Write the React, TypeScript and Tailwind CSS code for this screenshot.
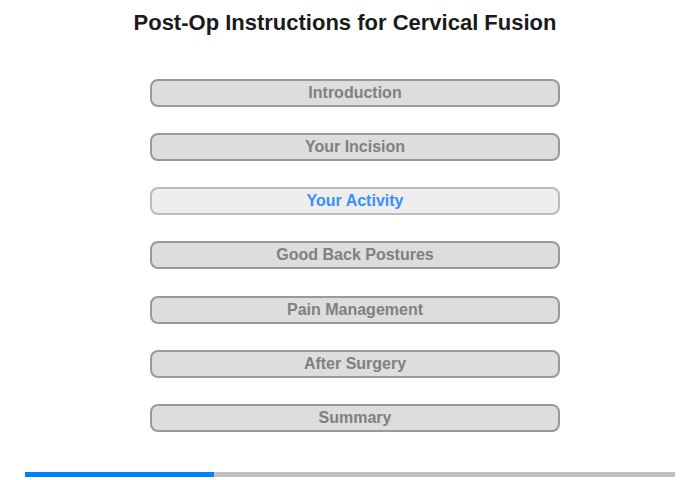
const sections = [
  "Introduction",
  "Your Incision",
  "Your Activity",
  "Good Back Postures",
  "Pain Management",
  "After Surgery",
  "Summary",
];

const current = "Your Activity";

export default function App() {
  return (
    <div className="flex h-[480px] w-[700px] flex-col bg-white font-['Liberation_Sans',Arial,sans-serif]">
      <h1 className="pt-[10px] pr-[10px] text-center text-[22px] font-bold leading-[25px] text-[#1a1a1a]">
        Post-Op Instructions for Cervical Fusion
      </h1>
      <nav className="mt-[44px] flex flex-col gap-[26.15px] pl-[150px]">
        {sections.map((name) => {
          const active = name === current;
          return (
            <button
              key={name}
              className={
                active
                  ? "h-[28px] w-[410px] rounded-[8px] border-2 border-[#bbbbbb] bg-[#eeeeee] text-[16px] font-bold text-[#3b8eff]"
                  : "h-[28px] w-[410px] rounded-[8px] border-2 border-[#999999] bg-[#dddddd] text-[16px] font-bold text-[#808080]"
              }
            >
              {name}
            </button>
          );
        })}
      </nav>
      <div className="mx-[25px] mt-[40px] flex h-[5px] w-[650px] bg-[#c0c0c0]">
        <div className="h-full w-[189px] bg-[#0080ff]" />
      </div>
    </div>
  );
}
